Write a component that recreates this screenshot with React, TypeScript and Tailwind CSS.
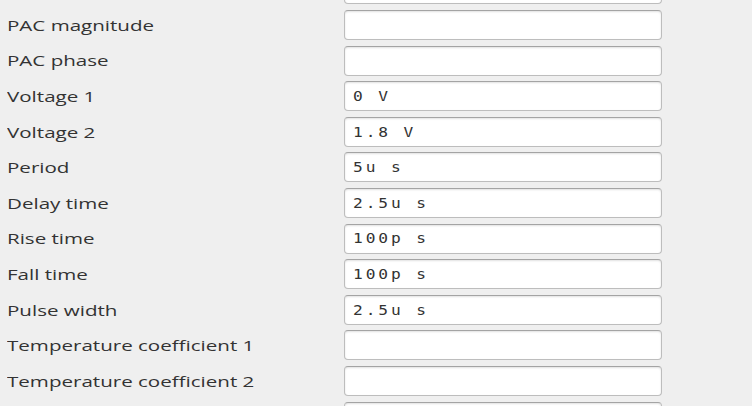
import React from "react";

interface Field {
  label: string;
  value: string;
}

const fields: Field[] = [
  { label: "", value: "" },
  { label: "PAC magnitude", value: "" },
  { label: "PAC phase", value: "" },
  { label: "Voltage 1", value: "0 V" },
  { label: "Voltage 2", value: "1.8 V" },
  { label: "Period", value: "5u s" },
  { label: "Delay time", value: "2.5u s" },
  { label: "Rise time", value: "100p s" },
  { label: "Fall time", value: "100p s" },
  { label: "Pulse width", value: "2.5u s" },
  { label: "Temperature coefficient 1", value: "" },
  { label: "Temperature coefficient 2", value: "" },
  { label: "", value: "" },
];

const Row: React.FC<Field> = ({ label, value }) => (
  <div className="flex items-center h-[30px] shrink-0">
    <div className="w-[344px] pl-[7px] text-[15px] text-[#333] font-['Open_Sans',sans-serif]">
      <span className="inline-block origin-left scale-x-[1.37] whitespace-nowrap">{label}</span>
    </div>
    <div className="w-[318px] h-[30px] flex items-center rounded-[4px] border border-[#bdbdbd] border-t-[#a4a4a4] bg-white shadow-[inset_0_1px_2px_rgba(0,0,0,0.12)] pl-[8px] text-[13.5px] text-[#333] font-['DejaVu_Sans_Mono',monospace]">
      <span className="inline-block origin-left scale-x-[1.2] tracking-[2.4px] whitespace-pre">{value}</span>
    </div>
  </div>
);

export default function App() {
  return (
    <div className="w-[752px] h-[406px] bg-[#efefef] overflow-hidden">
      <div className="flex flex-col gap-[5.6px] mt-[-25.6px]">
        {fields.map((f, i) => (
          <Row key={i} {...f} />
        ))}
      </div>
    </div>
  );
}
